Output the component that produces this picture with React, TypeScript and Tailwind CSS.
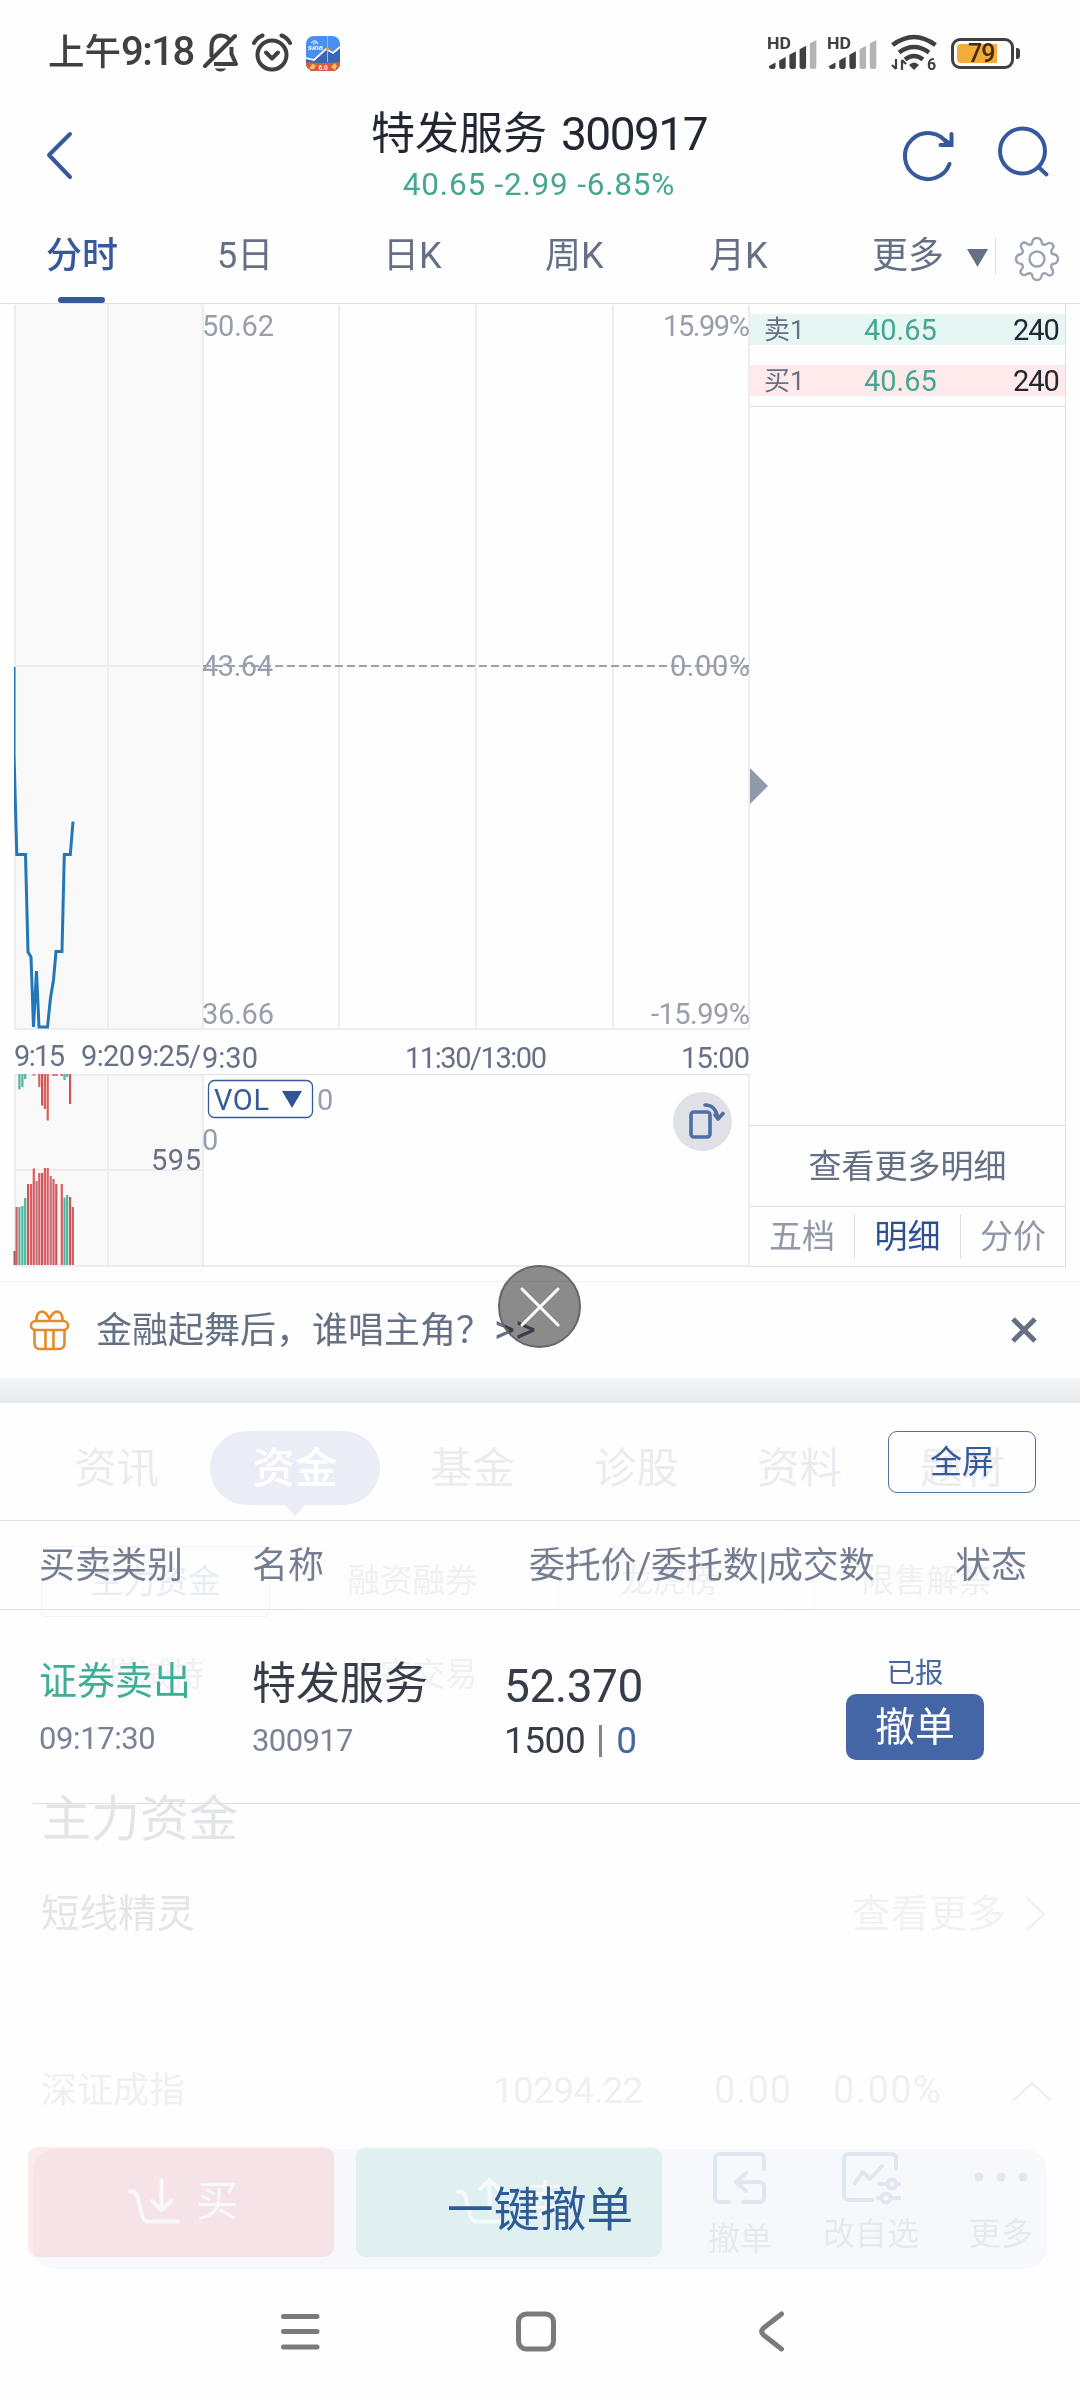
import React from "react";

const periods = [
  { label: "分时", left: "ml-[47px] w-[170px]" },
  { label: "5日", left: "w-[166px]" },
  { label: "日K", left: "w-[162px]" },
  { label: "周K", left: "w-[164px]" },
  { label: "月K", left: "w-[163px]" },
  { label: "更多", left: "w-[95px]" },
];

const RED = "#e15a5c";
const GREEN = "#52b39c";
const MIXED = "#b0788c";

// [x, top, color] of every auction volume bar, all standing on y = 961
const volumeBars: [number, number, string][] = [
  [14.5, 947, "#a8555c"],
  [16.5, 903, RED],
  [19.3, 903, GREEN],
  [22.3, 902, GREEN],
  [25.1, 894, GREEN],
  [28, 880, "#c4585a"],
  [31, 880, RED],
  [33.7, 864.5, RED],
  [36.5, 877, MIXED],
  [39.2, 869, RED],
  [42, 869, "#c4585a"],
  [44.8, 864, RED],
  [47.6, 864, RED],
  [50.6, 872, MIXED],
  [53.4, 875, RED],
  [56.2, 880, "#c4585a"],
  [61.7, 880, RED],
  [64.4, 893.5, GREEN],
  [67.1, 891, GREEN],
  [70, 893, "#c4585a"],
  [72.8, 903, RED],
];

// [x, bottom, color] of the unmatched bars hanging from the top edge
const unmatchedBars: [number, number, string][] = [
  [19.3, 785.5, GREEN],
  [22.3, 783, GREEN],
  [25.1, 775, GREEN],
  [33.7, 771.5, RED],
  [39.2, 783, RED],
  [42, 801.5, "#c4585a"],
  [44.8, 805, RED],
  [47.6, 816.5, RED],
  [53.4, 772, RED],
  [56.2, 772, RED],
  [61.7, 772, RED],
  [64.4, 776, GREEN],
  [67.1, 773, GREEN],
  [70, 800, "#c4585a"],
];

const Signal: React.FC<{ active: number }> = ({ active }) => (
  <svg width="50" height="40" viewBox="0 -4 50 40">
    <text x="0" y="12" fontSize="17" fontWeight="700" fill="#404040" textLength="24" lengthAdjust="spacingAndGlyphs" className="font-['Roboto']">
      HD
    </text>
    {[0, 1, 2, 3, 4].map((i) => (
      <path
        key={i}
        d={`M${2 + i * 10.2} ${29 - i * 5.6}l6.5 -3.5V29.5q0 2.5 -2.5 2.5h-1.500q-2.500 0 -2.500 -2.500z`}
        fill={i < active ? "#404040" : "#b4b4b4"}
      />
    ))}
  </svg>
);

const StatusBar = () => (
  <div className="flex h-[106px] items-center text-[#404040]">
    <div className="ml-[48px] flex w-[155px] items-center leading-[50px] font-medium">
      <span className="text-[36.5px]">上午</span>
      <span className="-mt-[2px] text-[40px] tracking-[-1.5px]">9:18</span>
    </div>
    <svg width="36" height="40" viewBox="0 0 36 40" fill="none" stroke="#404040" strokeWidth="4">
      <path d="M8.5 24V14Q8.5 3 18 2.5Q24 2.8 26.5 7" />
      <path d="M28.5 14V21L33 31H11" strokeLinejoin="round" />
      <path d="M2 33L32 3" strokeLinecap="round" />
      <path d="M12 35.5h11q-1.500 3 -5.500 3t-5.500 -3z" fill="#404040" stroke="none" />
    </svg>
    <svg className="ml-[13px]" width="40" height="40" viewBox="0 0 40 40" fill="none" stroke="#404040" strokeWidth="4">
      <circle cx="20" cy="22" r="14.500" />
      <path d="M14 19.500L20 25.500L26 19.500" strokeLinecap="round" strokeLinejoin="round" />
      <path d="M2 10Q5 4.500 10.500 2.500M38 10Q35 4.500 29.500 2.500" strokeLinecap="round" />
    </svg>
    <svg className="ml-[14px]" width="34" height="35" viewBox="0 0 34 35">
      <clipPath id="app">
        <rect width="34" height="35" rx="8" />
      </clipPath>
      <g clipPath="url(#app)">
        <rect width="34" height="35" fill="#4a8ef2" />
        <path d="M0 22L8 24L20 13L27 17L34 11V35H0z" fill="#3568b8" />
        <path d="M0 22L8 24L20 13L27 17L34 11" fill="none" stroke="#fff" strokeWidth="1.800" />
        <path d="M0 26Q17 28 34 26V35H0z" fill="#dd5a3a" />
        <path d="M21.500 0V26" stroke="#d5b07a" strokeWidth="1" />
        <circle cx="21.500" cy="13" r="1.800" fill="#f3a13b" />
        <path d="M5 7Q10 2 12 8M7 7.500Q10 5 10 8" fill="none" stroke="#fff" strokeWidth="1" />
        <text x="2" y="14" fontSize="8" fontStyle="italic" fontWeight="700" fill="#fff" textLength="15">sina</text>
        <text x="12.500" y="33.500" fontSize="6.500" fontWeight="700" fill="#fff">6.0</text>
        <path d="M3 33L6 28L10 29L8 33zM25 31L29 27L31 30L29 34z" fill="#f8c25c" />
      </g>
    </svg>
    <div className="ml-[427px] flex items-center gap-[10px]">
      <Signal active={4} />
      <Signal active={3} />
      <svg className="ml-[3px]" width="48" height="42" viewBox="0 0 48 42" fill="none" stroke="#404040" strokeWidth="4.500">
        <path d="M2.500 13Q24 -3 45.500 13M9 20.500Q24 9.500 39 20.500M15 27.500Q24 20.500 33 27.500" />
        <path d="M19 33Q24 28 29 33L24 38z" fill="#404040" stroke="none" />
        <path d="M6 27V37M6 37L2 33M12 38V28M12 28L16 32" strokeWidth="2.200" />
        <text x="37" y="38" fontSize="16" fontWeight="700" fill="#404040" stroke="none">6</text>
      </svg>
      <div className="ml-[3px] flex items-center">
        <div className="flex h-[31px] w-[63px] rounded-[9px] border-[3px] border-[#404040] p-[3px]">
          <div className="h-[19px] w-[40px] rounded-l-[4px] bg-[#f3ac3a] pl-[11px] text-[25px] leading-[20px] font-medium tracking-[-1px] text-[#402c10]">
            79
          </div>
        </div>
        <div className="ml-[2px] h-[11px] w-[4px] rounded-r-[3px] bg-[#404040]" />
      </div>
    </div>
  </div>
);

const Header = () => (
  <div className="flex h-[102px]">
    <svg className="mt-[24px] ml-[44px]" width="30" height="50" viewBox="0 0 30 50" fill="none" stroke="#35599a" strokeWidth="4">
      <path d="M26 4L5 25L26 47" strokeLinecap="round" strokeLinejoin="round" />
    </svg>
    <div className="ml-[148px] flex w-[634px] flex-col items-center whitespace-nowrap">
      <div className="flex h-[54px] items-center text-[#222733]">
        <span className="mt-[2px] text-[44px] leading-[54px]">特发服务</span>
        <span className="mt-[2px] ml-[14px] text-[46px] leading-[54px] tracking-[-1.5px]">300917</span>
      </div>
      <div className="pt-px text-[31.5px] leading-[48px] tracking-[0.8px] text-[#46a691]">40.65 -2.99 -6.85%</div>
    </div>
    <svg className="mt-[19px] ml-[45px]" width="156" height="60" viewBox="0 0 156 60" fill="none" stroke="#35599a" strokeWidth="4">
      <path d="M46.500 19A23 23 0 1 0 48.500 39" strokeLinecap="round" />
      <path d="M50.500 9V20H39.500M50.500 20L44 15" strokeLinecap="round" />
      <circle cx="121.500" cy="26" r="22.500" />
      <path d="M137.500 42L145.500 49.500" strokeLinecap="round" />
    </svg>
  </div>
);

const PeriodTabs = () => (
  <div className="flex h-[96px] items-center border-b border-[#dcdfe3] text-[36px] leading-[40px] text-[#667085]">
    {periods.map((item, index) => (
      <div key={index} className={item.left}>
        {index === 0 ? (
          <div className="relative flex h-[95px] w-[70px] items-center justify-center font-medium whitespace-nowrap text-[#35599a]">
            {item.label}
            <div className="absolute bottom-0 left-[11px] h-[6px] w-[47px] rounded-[3px] bg-[#35599a]" />
          </div>
        ) : (
          item.label
        )}
      </div>
    ))}
    <svg width="21" height="18" viewBox="0 0 21 18" className="mt-[5px]">
      <path d="M0 0H21L10.500 18z" fill="#667085" />
    </svg>
    <div className="ml-[7px] h-[38px] w-px bg-[#dfe1e5]" />
    <svg className="mt-[7px] ml-[17px]" width="48" height="48" viewBox="-24 -24 48 48" fill="none" stroke="#9aa1af" strokeWidth="2.400">
      <circle r="7.500" />
      <path
        strokeLinejoin="round"
        d="M-5 -15.500Q-4.500 -21 0 -21T5 -15.500Q6.500 -13.500 9 -14.500Q13 -17.500 15.500 -15T14.500 -9Q13.500 -6.500 15.500 -5Q21 -4.500 21 0T15.500 5Q13.500 6.500 14.500 9Q17.500 13 15 15.500T9 14.500Q6.500 13.500 5 15.500Q4.500 21 0 21T-5 15.500Q-6.500 13.500 -9 14.500Q-13 17.500 -15.500 15T-14.500 9Q-13.500 6.500 -15.500 5Q-21 4.500 -21 0T-15.500 -5Q-13.500 -6.500 -14.500 -9Q-17.500 -13 -15 -15.500T-9 -14.500Q-6.500 -13.500 -5 -15.500z"
      />
    </svg>
  </div>
);

// Coordinates below are relative to the top of the chart area
const PriceChart = () => (
  <svg width="750" height="963" viewBox="0 0 750 963" className="shrink-0 font-['Roboto']" fontSize="29">
    <clipPath id="plot">
      <rect x="14" y="0" width="736" height="963" />
    </clipPath>
    <rect x="15" y="0" width="188" height="725" fill="#f9f9f9" />
    <rect x="15" y="770" width="188" height="192" fill="#f9f9f9" />
    <g stroke="#ebedf0" strokeWidth="2" fill="none">
      <path d="M15 1V725M108 0V725M203 1V725M339 1V725M476 1V725M613 1V725M749 1V725M14 725H750" />
      <path d="M15 362H203M14 866H203M15 770V962M108 770V962M203 770V962M749 770V962M14 962H750M14 771H203" />
      <path d="M203 770.500H750" stroke="#dddfe3" strokeWidth="1" />
    </g>
    <path d="M203 362H749" stroke="#98a3b1" strokeWidth="2" strokeDasharray="8 4" />
    <path
      d="M14 363V450L16.800 550.500H25.500L28 648L31 653L33.500 723L36.500 667L39 723H47.500L50.500 694L53.500 676L56 647.500H62L64.300 550.500H70.300L73 517.500"
      fill="none"
      stroke="#2377b8"
      strokeWidth="3"
      clipPath="url(#plot)"
    />
    {volumeBars.map(([x, top, color], index) => (
      <rect key={index} x={x - 1} y={top} width="2.200" height={961 - top} fill={color} />
    ))}
    {unmatchedBars.map(([x, bottom, color], index) => (
      <rect key={index} x={x - 1} y={770} width="2.200" height={bottom - 770} fill={color} />
    ))}
    <g fill="#989eab">
      <text x="202" y="32" textLength="72">50.62</text>
      <text x="202" y="372" textLength="71">43.64</text>
      <text x="202" y="720" textLength="72">36.66</text>
      <text x="663" y="32" textLength="87">15.99%</text>
      <text x="670" y="372" textLength="80">0.00%</text>
      <text x="651" y="720" textLength="99">-15.99%</text>
      <text x="317" y="806">0</text>
      <text x="202" y="846">0</text>
    </g>
    <g fill="#687086">
      <text x="14" y="762" textLength="51">9:15</text>
      <text x="81" y="762" textLength="54">9:20</text>
      <text x="137" y="762" textLength="64">9:25/</text>
      <text x="202" y="764" textLength="56">9:30</text>
      <text x="405" y="764" textLength="142">11:30/13:00</text>
      <text x="681" y="764" textLength="69">15:00</text>
      <text x="151" y="866" textLength="50">595</text>
    </g>
    <rect x="208.500" y="776.500" width="104" height="37" rx="6" fill="#fff" stroke="#35599a" strokeWidth="1.300" />
    <text x="214" y="806" textLength="55" fill="#35599a">VOL</text>
    <path d="M282 787H302L292 804z" fill="#2f5599" />
    <circle cx="702.500" cy="817.500" r="29.500" fill="#e0e1e7" />
    <g fill="none" stroke="#4e6ea6" strokeWidth="3.600" strokeLinecap="round" strokeLinejoin="round">
      <rect x="691" y="808" width="19" height="25" rx="3" />
      <path d="M705 801Q716 801 718 815M718 815L723 809.500M718 815L715 811" />
    </g>
  </svg>
);

const quotes = [
  { side: "卖1", price: "40.65", amount: "240", bg: "bg-[#e6f6f2]" },
  { side: "买1", price: "40.65", amount: "240", bg: "bg-[#ffeaeb]" },
];

const OrderBook = () => (
  <div className="relative flex w-[316px] flex-col border-r border-b border-[#dcdfe3]">
    <div className="flex h-[103px] flex-col gap-[20px] border-b border-[#dcdfe3] pt-[10px]">
      {quotes.map((item, index) => (
        <div key={index} className={`flex h-[31px] items-center text-[29px] leading-[31px] ${item.bg}`}>
          <span className="mt-[2px] ml-[14px] w-[100px] text-[26px] text-[#687086]">{item.side}</span>
          <span className="mt-[2px] w-[71px] text-[#46a691]">{item.price}</span>
          <span className="mt-[2px] ml-[78px] tracking-[-1px] text-[#222733]">{item.amount}</span>
        </div>
      ))}
    </div>
    <svg className="mt-[361px]" width="18" height="36" viewBox="0 0 18 36">
      <path d="M0 0L18 18L0 36z" fill="#8f9bad" />
    </svg>
    <div className="mt-auto flex h-[81px] items-center justify-center border-t border-[#dcdfe3] pt-[2px] text-[33px] text-[#667085]">
      查看更多明细
    </div>
    <div className="flex h-[60px] items-center border-t border-[#dcdfe3] text-center text-[33px] leading-[45px] text-[#9298a8]">
      <div className="w-[105px] border-r border-[#dcdfe3]">五档</div>
      <div className="w-[106px] border-r border-[#dcdfe3] text-[#2b5094]">明细</div>
      <div className="flex-1">分价</div>
    </div>
  </div>
);

const Notice = () => (
  <div className="relative pt-[14px]">
    <div className="flex h-[97px] items-center border-t border-[#f0f1f2]">
      <svg className="ml-[29px]" width="42" height="42" viewBox="0 0 42 42" fill="none" stroke="#e58a2b" strokeWidth="2.600">
        <rect x="2" y="12" width="37" height="9" rx="4.500" />
        <path d="M5.500 21V34Q5.500 40 11 40H30Q35.500 40 35.500 34V21M16.500 21V40M24.500 21V40" />
        <path d="M7.500 12Q7 3 13 2.500Q17 2.500 20.500 10Q24 2.500 28 2.500Q34 3 33.500 12" strokeLinejoin="round" />
      </svg>
      <div className="mt-px ml-[25px] text-[36px] leading-[50px] whitespace-pre text-[#667085]">金融起舞后，谁唱主角？</div>
      <div className="ml-[2px] text-[40px] leading-[50px] text-[#667085]">&gt;&gt;</div>
      <svg className="ml-auto mr-[42px]" width="28" height="28" viewBox="0 0 28 28" stroke="#667085" strokeWidth="5">
        <path d="M3 3L25 25M25 3L3 25" />
      </svg>
    </div>
    {/* floating close button */}
    <div className="absolute -top-[2px] left-[498px] flex h-[83px] w-[83px] items-center justify-center rounded-full border-2 border-[#666] bg-black/45">
      <svg width="42" height="42" viewBox="0 0 42 42" stroke="#fff" strokeWidth="3" strokeLinecap="round">
        <path d="M3 3L39 39M39 3L3 39" />
      </svg>
    </div>
  </div>
);

// Page content that shows through the translucent order sheet
const FadedPage = () => (
  <div className="flex h-[877px] flex-col pt-px whitespace-nowrap">
    <div className="flex h-[128px] items-center text-[42.5px] leading-[75px] text-[#ebecef]">
      <span className="ml-[74px] w-[136px]">资讯</span>
      <div className="relative h-[74px] w-[170px] rounded-full bg-[#eaedf6] text-center font-medium text-white">
        资金
        <svg className="absolute -bottom-[11px] left-[74px]" width="22" height="12" viewBox="0 0 22 12">
          <path d="M0 0H22L11 12z" fill="#eaedf6" />
        </svg>
      </div>
      <span className="ml-[50px] w-[164px]">基金</span>
      <span className="w-[163px]">诊股</span>
      <span className="w-[163px]">资料</span>
      <span>题材</span>
    </div>
    <div className="mt-[14px] ml-[41px] grid w-[1000px] grid-cols-4 gap-x-[28px] gap-y-[23px] text-center text-[32.500px] leading-[71px] text-[#f0f1f4]">
      <div className="h-[71px] rounded-[6px] border border-[#f0f3f7] text-[#e8ecf5]">主力资金</div>
      <div className="h-[71px] bg-[#fdfdfd]">融资融券</div>
      <div className="h-[71px] bg-[#fdfdfd]">龙虎榜</div>
      <div className="h-[71px] bg-[#fdfdfd]">限售解禁</div>
      <div className="h-[71px] bg-[#fdfdfd]">增减持</div>
      <div className="h-[71px] bg-[#fdfdfd]">大宗交易</div>
    </div>
    <div className="mt-[78px] ml-[42px] text-[49px] leading-[62px] text-[#e3e4e7]">主力资金</div>
    <div className="mt-[38px] flex h-[50px] items-center text-[38.500px] leading-[50px]">
      <span className="ml-[41px] text-[#e4e5e8]">短线精灵</span>
      <span className="ml-auto text-[#f2f2f5]">查看更多</span>
      <svg className="mr-[34px] ml-[18px]" width="22" height="38" viewBox="0 0 22 38" fill="none" stroke="#f0f1f3" strokeWidth="2.500">
        <path d="M2 2L20 19L2 36" />
      </svg>
    </div>
    <div className="mt-[110px] flex h-[84px] items-center border-b border-[#fafafa] text-[36px] text-[#eff0f2]">
      <span className="mt-px ml-[41px] w-[452px]">深证成指</span>
      <span className="w-[221px] text-[37px] tracking-[-0.7px]">10294.22</span>
      <span className="w-[119px] text-[38px] tracking-[1px]">0.00</span>
      <span className="w-[178px] text-[38px] tracking-[1.5px]">0.00%</span>
      <svg width="42" height="22" viewBox="0 0 42 22" fill="none" stroke="#f0f1f3" strokeWidth="2.500">
        <path d="M2 21L21 3L40 21" />
      </svg>
    </div>
    <div className="mt-[16px] ml-[33px] flex h-[120px] w-[1014px] shrink-0 rounded-[22px] bg-[#f6f8fc] text-[32px] leading-[40px] text-[#e7e9ee]">
      <div className="ml-[666px] flex w-[82px] flex-col items-center">
        <svg className="mt-[2px]" width="56" height="54" viewBox="0 0 56 54" fill="none" stroke="#e0e7f1" strokeWidth="4" strokeLinecap="round" strokeLinejoin="round">
          <path d="M17 51H8Q3 51 3 46V8Q3 3 8 3H47Q52 3 52 8V18" />
          <path d="M31 51H47Q52 51 52 46V36Q52 31 47 31H24M34 22L24 31L34 40" />
        </svg>
        <span className="mt-[14px]">撤单</span>
      </div>
      <div className="ml-[35px] flex w-[110px] flex-col items-center">
        <svg className="mt-[2px]" width="60" height="54" viewBox="0 0 60 54" fill="none" stroke="#e0e7f1" strokeWidth="4" strokeLinecap="round" strokeLinejoin="round">
          <path d="M31 49H8Q3 49 3 44V8Q3 3 8 3H50Q55 3 55 8V18" />
          <path d="M14 32L22 21L29 28L41 15" />
          <circle cx="51" cy="33" r="4.500" />
          <circle cx="45" cy="47" r="4.500" />
          <path d="M38 33H46M56 33H59M37 47H40M50 47H59" />
        </svg>
        <span className="mt-[9px]">改自选</span>
      </div>
      <div className="ml-[35px] flex w-[80px] flex-col items-center">
        <svg className="mt-[23px]" width="54" height="10" viewBox="0 0 54 10" fill="#e0e7f1">
          <circle cx="5" cy="5" r="4.500" />
          <circle cx="27" cy="5" r="4.500" />
          <circle cx="49" cy="5" r="4.500" />
        </svg>
        <span className="mt-[32px]">更多</span>
      </div>
    </div>
  </div>
);

const OrderSheet = () => (
  <div className="absolute inset-0 flex flex-col whitespace-nowrap">
    <div className="flex h-[118px] items-center justify-end border-b border-[#dfe1e4]">
      <div className="mr-[44px] flex h-[62px] w-[148px] items-center justify-center rounded-[9px] border border-[#50709f] text-[32px] text-[#35599a]">
        全屏
      </div>
    </div>
    <div className="flex h-[89px] items-center border-b border-[#dfe1e4] pt-[2px] text-[36px] text-[#747d92]">
      <span className="ml-[39px] w-[213px]">买卖类别</span>
      <span className="w-[277px]">名称</span>
      <span className="w-[426px] tracking-[-0.2px]">委托价/委托数|成交数</span>
      <span>状态</span>
    </div>
    <div className="ml-[33px] flex h-[194px] border-b border-[#dfe1e4]">
      <div className="ml-[6px] w-[213px] pt-[41px]">
        <div className="text-[38px] leading-[60px] text-[#3fae97]">证券卖出</div>
        <div className="pt-[6px] text-[31px] leading-[44px] tracking-[-0.4px] text-[#7a8396]">09:17:30</div>
      </div>
      <div className="w-[252px] pt-[44px]">
        <div className="text-[44px] leading-[60px] text-[#373c49]">特发服务</div>
        <div className="pt-[5px] text-[31px] leading-[44px] tracking-[-0.6px] text-[#7a8396]">300917</div>
      </div>
      <div className="w-[342px] pt-[46px] text-[#373c49]">
        <div className="text-[46px] leading-[60px] tracking-[-0.4px]">52.370</div>
        <div className="flex items-center pt-px text-[37px] leading-[48px] tracking-[-0.5px]">
          1500
          <div className="mx-[14px] h-[32px] w-[3px] bg-[#7c879a]" />
          <span className="text-[#46679f]">0</span>
        </div>
      </div>
      <div className="flex w-[138px] flex-col items-center pt-[43px]">
        <div className="text-[28.500px] leading-[41px] text-[#46679f]">已报</div>
        <div className="flex h-[66px] w-[138px] items-center justify-center rounded-[10px] bg-[#4466a6] pt-[2px] text-[40px] text-white">
          撤单
        </div>
      </div>
    </div>
    <div className="mt-[343px] ml-[28px] flex gap-[22px] text-[42px] leading-[110px] text-white">
      <div className="flex h-[110px] w-[306px] rounded-[10px] bg-[#ffeaeb] pl-[98px] mix-blend-multiply">
        <TradeIcon head="M26 24L35.500 33L45 24" />
        <span className="ml-[14px]">买</span>
      </div>
      <div className="relative h-[110px] w-[306px] rounded-[10px] bg-[#e9f6f3] mix-blend-multiply">
        <div className="flex pl-[98px]">
          <TradeIcon head="M26 12L35.500 3L45 12" />
          <span className="ml-[14px]">卖</span>
        </div>
        <div className="absolute top-[8px] left-[91px] text-[46.500px] text-[#2f5c98]">一键撤单</div>
      </div>
    </div>
  </div>
);

const TradeIcon: React.FC<{ head: string }> = ({ head }) => (
  <svg className="mt-[30px]" width="56" height="50" viewBox="0 0 56 50" fill="none" stroke="#fff" strokeWidth="4" strokeLinecap="round" strokeLinejoin="round">
    <path d="M4 14.500H6Q10 14.500 11.500 20L16 38Q18 44.500 22 44.500H52" />
    <path d="M35.500 3V33" />
    <path d={head} />
  </svg>
);

const NavBar = () => (
  <div className="flex h-[120px] pt-[29px]">
    <svg width="1080" height="44" viewBox="0 0 1080 44" fill="none" stroke="#7b7b7b" strokeWidth="5" strokeLinecap="round">
      <path d="M283.500 7.500H317M283.500 22.500H317M283.500 38H317" />
      <rect x="518.500" y="5" width="35" height="35" rx="8" />
      <path d="M781.500 5L763.500 19Q760 22.500 763.500 26L781.500 40" strokeLinejoin="round" />
    </svg>
  </div>
);

export default function App() {
  return (
    <div className="h-[2400px] w-[1080px] overflow-hidden bg-[#fefefe] font-['Roboto','Noto_Sans_CJK_SC',sans-serif]">
      <StatusBar />
      <Header />
      <PeriodTabs />
      <div className="flex h-[963px]">
        <PriceChart />
        <OrderBook />
      </div>
      <Notice />
      <div className="h-[25px] bg-linear-to-b from-[#f4f5f6] to-[#e5e8ee]" />
      <div className="relative">
        <FadedPage />
        <OrderSheet />
      </div>
      <NavBar />
    </div>
  );
}
